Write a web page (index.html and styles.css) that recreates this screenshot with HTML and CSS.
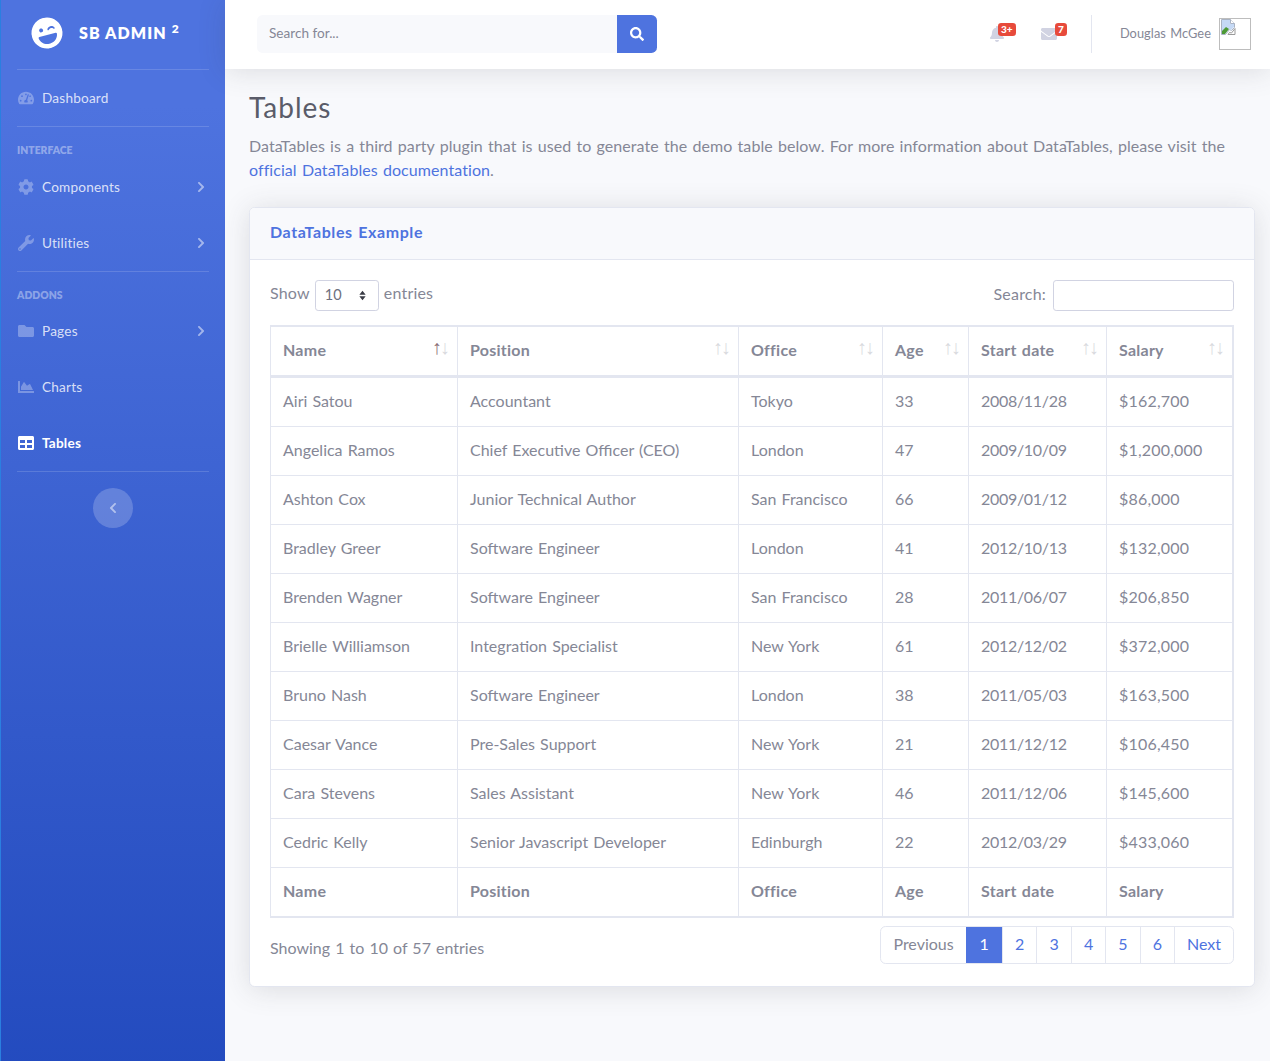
FILE: index.html
```html
<!DOCTYPE html>
<html lang="en">
<head>
<meta charset="utf-8">
<title>Tables</title>
<link rel="stylesheet" href="styles.css">
</head>
<body>
<svg class="sprites" width="0" height="0" aria-hidden="true">
  <symbol id="i-search" viewBox="0 0 512 512"><path d="M505 442.7L405.3 343c-4.5-4.5-10.6-7-17-7H372c27.6-35.3 44-79.7 44-128C416 93.1 322.9 0 208 0S0 93.1 0 208s93.1 208 208 208c48.3 0 92.7-16.4 128-44v16.3c0 6.4 2.5 12.5 7 17l99.7 99.7c9.4 9.4 24.6 9.4 33.9 0l28.3-28.3c9.4-9.4 9.4-24.6.1-34zM208 336c-70.7 0-128-57.2-128-128 0-70.7 57.2-128 128-128 70.7 0 128 57.2 128 128 0 70.7-57.2 128-128 128z"/></symbol>
  <symbol id="i-bell" viewBox="0 0 448 512"><path d="M224 512c35.32 0 63.97-28.65 63.97-64H160.03c0 35.35 28.65 64 63.97 64zm215.39-149.71c-19.32-20.76-55.47-51.99-55.47-154.29 0-77.7-54.48-139.9-127.94-155.16V32c0-17.67-14.32-32-31.98-32s-31.98 14.33-31.98 32v20.84C118.56 68.1 64.08 130.3 64.08 208c0 102.3-36.15 133.53-55.47 154.29-6 6.45-8.66 14.16-8.61 21.71.11 16.4 12.98 32 32.1 32h383.8c19.12 0 32-15.6 32.1-32 .05-7.55-2.61-15.27-8.61-21.71z"/></symbol>
  <symbol id="i-envelope" viewBox="0 0 512 512"><path d="M502.3 190.8c3.9-3.1 9.7-.2 9.7 4.7V400c0 26.5-21.5 48-48 48H48c-26.5 0-48-21.5-48-48V195.6c0-5 5.7-7.8 9.7-4.7 22.4 17.4 52.1 39.5 154.1 113.6 21.1 15.4 56.7 47.8 92.2 47.6 35.7.3 72-32.8 92.3-47.6 102-74.1 131.6-96.3 154-113.7zM256 320c23.2.4 56.6-29.2 73.4-41.4 132.7-96.3 142.8-104.7 173.4-128.7 5.8-4.5 9.2-11.5 9.2-18.9v-19c0-26.5-21.5-48-48-48H48C21.5 64 0 85.5 0 112v19c0 7.4 3.4 14.3 9.2 18.9 30.6 23.9 40.7 32.4 173.4 128.7 16.8 12.2 50.2 41.8 73.4 41.4z"/></symbol>
  <symbol id="i-right" viewBox="0 0 320 512"><path d="M285.476 272.971L91.132 467.314c-9.373 9.373-24.569 9.373-33.941 0l-22.667-22.667c-9.357-9.357-9.375-24.522-.04-33.901L188.505 256 34.484 101.255c-9.335-9.379-9.317-24.544.04-33.901l22.667-22.667c9.373-9.373 24.569-9.373 33.941 0L285.475 239.03c9.373 9.372 9.373 24.568.001 33.941z"/></symbol>
  <symbol id="i-left" viewBox="0 0 320 512"><path d="M34.52 239.03L228.87 44.69c9.37-9.37 24.57-9.37 33.94 0l22.67 22.67c9.36 9.36 9.37 24.52.04 33.9L131.49 256l154.02 154.75c9.34 9.38 9.32 24.54-.04 33.9l-22.67 22.67c-9.37 9.37-24.57 9.37-33.94 0L34.52 272.97c-9.37-9.37-9.37-24.57 0-33.94z"/></symbol>
  <symbol id="i-folder" viewBox="0 0 512 512"><path d="M464 128H272l-64-64H48C21.49 64 0 85.49 0 112v288c0 26.51 21.49 48 48 48h416c26.51 0 48-21.49 48-48V176c0-26.51-21.49-48-48-48z"/></symbol>
  <symbol id="i-chart" viewBox="0 0 512 512"><path d="M500 384c6.6 0 12 5.4 12 12v40c0 6.6-5.4 12-12 12H12c-6.6 0-12-5.4-12-12V76c0-6.6 5.4-12 12-12h40c6.6 0 12 5.4 12 12v308h436zM372.7 159.5L288 216l-85.3-113.7c-5.1-6.8-15.5-6.3-19.9 1L96 248v104h384l-89.9-187.8c-3.2-6.5-11.4-8.7-17.4-4.7z"/></symbol>
  <symbol id="i-table" viewBox="0 0 512 512"><path d="M464 32H48C21.49 32 0 53.49 0 80v352c0 26.51 21.49 48 48 48h416c26.51 0 48-21.49 48-48V80c0-26.51-21.49-48-48-48zM224 416H64v-96h160v96zm0-160H64v-96h160v96zm224 160H288v-96h160v96zm0-160H288v-96h160v96z"/></symbol>
  <symbol id="i-cog" viewBox="0 0 512 512"><path d="M487.4 315.7l-42.6-24.6c4.3-23.2 4.3-47 0-70.2l42.6-24.6c4.9-2.8 7.1-8.6 5.5-14-11.1-35.6-30-67.8-54.7-94.6-3.8-4.1-10-5.1-14.8-2.3L380.8 110c-17.9-15.4-38.5-27.3-60.8-35.1V25.8c0-5.6-3.9-10.5-9.4-11.7-36.7-8.2-74.3-7.8-109.2 0-5.5 1.2-9.4 6.1-9.4 11.7V75c-22.2 7.9-42.8 19.8-60.8 35.1L88.7 85.5c-4.9-2.8-11-1.9-14.8 2.3-24.7 26.7-43.6 58.9-54.7 94.6-1.7 5.4.6 11.2 5.5 14L67.3 221c-4.3 23.2-4.3 47 0 70.2l-42.6 24.6c-4.9 2.8-7.1 8.6-5.5 14 11.1 35.6 30 67.8 54.7 94.6 3.8 4.1 10 5.1 14.8 2.3l42.6-24.6c17.9 15.4 38.5 27.3 60.8 35.1v49.2c0 5.6 3.9 10.5 9.4 11.7 36.7 8.2 74.3 7.8 109.2 0 5.5-1.2 9.4-6.1 9.4-11.7v-49.2c22.2-7.9 42.8-19.8 60.8-35.1l42.6 24.6c4.9 2.8 11 1.9 14.8-2.3 24.7-26.7 43.6-58.9 54.7-94.6 1.5-5.5-.7-11.3-5.6-14.1zM256 336c-44.1 0-80-35.9-80-80s35.9-80 80-80 80 35.9 80 80-35.9 80-80 80z"/></symbol>
  <symbol id="i-wrench" viewBox="0 0 512 512"><path d="M507.73 109.1c-2.24-9.03-13.54-12.09-20.12-5.51l-74.36 74.36-67.88-11.31-11.31-67.88 74.36-74.36c6.62-6.62 3.43-17.9-5.66-20.16-47.38-11.74-99.55.91-136.58 37.93-39.64 39.64-50.55 97.1-34.05 147.2L18.74 402.76c-24.99 24.99-24.99 65.51 0 90.5 24.99 24.99 65.51 24.99 90.5 0l213.21-213.21c50.12 16.71 107.47 5.68 147.37-34.22 37.07-37.07 49.7-89.32 37.91-136.73zM64 472c-13.25 0-24-10.75-24-24 0-13.26 10.75-24 24-24s24 10.74 24 24c0 13.25-10.75 24-24 24z"/></symbol>
  <symbol id="i-gauge" viewBox="0 0 576 512"><path d="M288 32C128.94 32 0 160.94 0 320c0 52.8 14.25 102.26 39.06 144.8 5.61 9.62 16.3 15.2 27.44 15.2h443c11.14 0 21.83-5.58 27.44-15.2C561.75 422.26 576 372.8 576 320c0-159.06-128.94-288-288-288zm0 64c14.71 0 26.58 10.13 30.32 23.65-1.11 2.26-2.64 4.23-3.45 6.67l-9.22 27.67c-5.13 3.49-10.97 6.01-17.64 6.01-17.67 0-32-14.33-32-32S270.33 96 288 96zM96 384c-17.67 0-32-14.33-32-32s14.33-32 32-32 32 14.33 32 32-14.33 32-32 32zm48-160c-17.67 0-32-14.33-32-32s14.33-32 32-32 32 14.33 32 32-14.33 32-32 32zm246.77-72.41l-61.33 184C343.13 347.33 352 364.54 352 384c0 11.72-3.38 22.55-8.88 32H232.88c-5.5-9.45-8.88-20.28-8.88-32 0-33.94 26.5-61.43 59.9-63.59l61.34-184.01c4.17-12.56 17.73-19.45 30.36-15.17 12.57 4.19 19.35 17.79 15.17 30.36zm14.66 57.2l15.52-46.55c3.47-1.29 7.13-2.23 11.05-2.23 17.67 0 32 14.33 32 32s-14.33 32-32 32c-11.38-.01-20.89-6.28-26.57-15.22zM480 384c-17.67 0-32-14.33-32-32s14.33-32 32-32 32 14.33 32 32-14.33 32-32 32z"/></symbol>
  <symbol id="i-laugh" viewBox="0 0 496 512"><path d="M248 8C111 8 0 119 0 256s111 248 248 248 248-111 248-248S385 8 248 8zm20.1 198.1c4-25.2 34.2-42.1 59.9-42.1s55.9 16.9 59.9 42.1c1.7 11.1-11.4 18.3-19.8 10.8l-9.5-8.5c-14.8-13.2-46.2-13.2-61 0L288 217c-8.4 7.4-21.6.3-19.9-10.9zM168 160c17.7 0 32 14.3 32 32s-14.3 32-32 32-32-14.3-32-32 14.3-32 32-32zm230.9 146C390 377 329.4 432 256 432h-16c-73.4 0-134-55-142.9-126-1.2-9.5 6.3-18 15.9-18h270c9.6 0 17.1 8.4 15.9 18z"/></symbol>
</svg>

<div class="wrapper">
  <aside class="sidebar">
    <a class="brand" href="#">
      <svg class="brand-icon"><use href="#i-laugh"/></svg>
      <span class="brand-text">SB ADMIN <sup>2</sup></span>
    </a>
    <hr class="side-rule">
    <a class="nav-link" href="#"><svg class="nav-icon"><use href="#i-gauge"/></svg><span>Dashboard</span></a>
    <hr class="side-rule">
    <div class="side-heading">Interface</div>
    <a class="nav-link" href="#"><svg class="nav-icon"><use href="#i-cog"/></svg><span>Components</span><svg class="nav-arrow"><use href="#i-right"/></svg></a>
    <a class="nav-link" href="#"><svg class="nav-icon"><use href="#i-wrench"/></svg><span>Utilities</span><svg class="nav-arrow"><use href="#i-right"/></svg></a>
    <hr class="side-rule">
    <div class="side-heading tight">Addons</div>
    <a class="nav-link" href="#"><svg class="nav-icon"><use href="#i-folder"/></svg><span>Pages</span><svg class="nav-arrow"><use href="#i-right"/></svg></a>
    <a class="nav-link" href="#"><svg class="nav-icon"><use href="#i-chart"/></svg><span>Charts</span></a>
    <a class="nav-link active" href="#"><svg class="nav-icon"><use href="#i-table"/></svg><span>Tables</span></a>
    <hr class="side-rule">
    <button class="side-toggle" type="button" aria-label="Toggle sidebar"><svg class="toggle-icon"><use href="#i-left"/></svg></button>
  </aside>

  <div class="main">
    <header class="topbar">
      <form class="top-search">
        <input class="top-input" type="text" placeholder="Search for...">
        <button class="top-btn" type="button" aria-label="Search"><svg class="top-btn-icon"><use href="#i-search"/></svg></button>
      </form>
      <div class="top-right">
        <a class="alert-link bell" href="#"><svg class="bell-icon"><use href="#i-bell"/></svg><span class="badge">3+</span></a>
        <a class="alert-link mail" href="#"><svg class="mail-icon"><use href="#i-envelope"/></svg><span class="badge">7</span></a>
        <div class="top-divider"></div>
        <a class="user" href="#">
          <span class="user-name">Douglas McGee</span>
          <span class="avatar">
            <svg class="broken" viewBox="0 0 16 16">
              <path d="M1.500 .5h9l4 4v4l-3 3-2-1-4 5h-4z" fill="#fff" stroke="#a9b3c4"/>
              <path d="M2 1h8v4h4v3l-3 3-2-1-4 5H2z" fill="#c5d9f5"/>
              <path d="M2 12l4-4 3 2-4 5H2z" fill="#4d9a35"/>
              <path d="M10.500 .5v4h4" fill="#fff" stroke="#a9b3c4"/>
              <path d="M15 9.500v6H8l1.500-2 2 .5z" fill="#fff" stroke="#9a9a9a"/>
            </svg>
          </span>
        </a>
      </div>
    </header>

    <main class="content">
      <h1 class="page-title">Tables</h1>
      <p class="intro">DataTables is a third party plugin that is used to generate the demo table below. For more information about DataTables, please visit the <a href="#">official DataTables documentation</a>.</p>

      <section class="card">
        <div class="card-header"><h6>DataTables Example</h6></div>
        <div class="card-body">
          <div class="dt-top">
            <label class="dt-length"><span class="dt-label">Show</span><span class="select-box">10<svg class="select-arrows" viewBox="0 0 10 14"><path d="M5 1l4 5H1zM5 13L1 8h8z"/></svg></span><span class="dt-label">entries</span></label>
            <label class="dt-filter"><span class="dt-label">Search:</span><input class="dt-input" type="search"></label>
          </div>
          <table class="data">
            <colgroup>
              <col class="c1"><col class="c2"><col class="c3"><col class="c4"><col class="c5"><col class="c6">
            </colgroup>
            <thead>
              <tr>
                <th class="sort asc">Name</th><th class="sort">Position</th><th class="sort">Office</th><th class="sort">Age</th><th class="sort">Start date</th><th class="sort">Salary</th>
              </tr>
            </thead>
            <tbody>
              <tr><td>Airi Satou</td><td>Accountant</td><td>Tokyo</td><td>33</td><td>2008/11/28</td><td>$162,700</td></tr>
              <tr><td>Angelica Ramos</td><td>Chief Executive Officer (CEO)</td><td>London</td><td>47</td><td>2009/10/09</td><td>$1,200,000</td></tr>
              <tr><td>Ashton Cox</td><td>Junior Technical Author</td><td>San Francisco</td><td>66</td><td>2009/01/12</td><td>$86,000</td></tr>
              <tr><td>Bradley Greer</td><td>Software Engineer</td><td>London</td><td>41</td><td>2012/10/13</td><td>$132,000</td></tr>
              <tr><td>Brenden Wagner</td><td>Software Engineer</td><td>San Francisco</td><td>28</td><td>2011/06/07</td><td>$206,850</td></tr>
              <tr><td>Brielle Williamson</td><td>Integration Specialist</td><td>New York</td><td>61</td><td>2012/12/02</td><td>$372,000</td></tr>
              <tr><td>Bruno Nash</td><td>Software Engineer</td><td>London</td><td>38</td><td>2011/05/03</td><td>$163,500</td></tr>
              <tr><td>Caesar Vance</td><td>Pre-Sales Support</td><td>New York</td><td>21</td><td>2011/12/12</td><td>$106,450</td></tr>
              <tr><td>Cara Stevens</td><td>Sales Assistant</td><td>New York</td><td>46</td><td>2011/12/06</td><td>$145,600</td></tr>
              <tr><td>Cedric Kelly</td><td>Senior Javascript Developer</td><td>Edinburgh</td><td>22</td><td>2012/03/29</td><td>$433,060</td></tr>
            </tbody>
            <tfoot>
              <tr><th>Name</th><th>Position</th><th>Office</th><th>Age</th><th>Start date</th><th>Salary</th></tr>
            </tfoot>
          </table>
          <div class="dt-bottom">
            <div class="dt-info">Showing 1 to 10 of 57 entries</div>
            <ul class="pager">
              <li class="pg prev">Previous</li>
              <li class="pg current">1</li>
              <li class="pg num">2</li>
              <li class="pg num">3</li>
              <li class="pg num">4</li>
              <li class="pg num">5</li>
              <li class="pg num">6</li>
              <li class="pg next">Next</li>
            </ul>
          </div>
        </div>
      </section>
    </main>
  </div>
</div>
</body>
</html>
```
FILE: styles.css
```css
* { box-sizing: border-box; }
html, body { height: 100%; }
body {
  margin: 0;
  background: #f8f9fc;
  color: #858796;
  font-family: "Lato", "Noto Sans", "Liberation Sans", sans-serif;
  font-size: 16px;
  line-height: 24px;
  word-spacing: 1px;
  overflow: hidden;
}
a { color: #4e73df; text-decoration: none; }
.sprites { position: absolute; }
svg { fill: currentColor; display: block; }

.wrapper { display: flex; min-height: 1061px; }

/* sidebar */
.sidebar {
  width: 225px;
  flex: none;
  background: linear-gradient(180deg, #4e73df 10%, #224abe 103%);
  border-left: 1px solid #2a7fe0;
  display: flex;
  flex-direction: column;
}
.brand {
  height: 69px;
  display: flex;
  align-items: center;
  padding: 0 0 4px 30px;
  color: #fff;
}
.brand-icon { width: 32px; height: 32px; transform: rotate(-15deg); }
.brand-text {
  margin-left: 16px;
  font-size: 16px;
  font-weight: 800;
  letter-spacing: 1.1px;
  word-spacing: 0;
  white-space: nowrap;
}
.brand-text sup { font-size: 12px; line-height: 0; vertical-align: 6px; }
.side-rule {
  margin: 0 16px;
  height: 1px;
  border: 0;
  background: rgba(255, 255, 255, .15);
  flex: none;
}
.side-heading {
  margin: 15px 0 0;
  padding: 0 16px;
  height: 17px;
  line-height: 16px;
  font-size: 10.4px;
  font-weight: 800;
  text-transform: uppercase;
  color: rgba(255, 255, 255, .4);
}
.side-heading.tight { height: 16px; }
.nav-link {
  height: 56px;
  display: flex;
  align-items: center;
  padding: 0 20px 0 17px;
  font-size: 13.6px;
  letter-spacing: .2px;
  color: rgba(255, 255, 255, .8);
  flex: none;
}
.nav-icon {
  width: 16px;
  height: 16px;
  margin-right: 8px;
  color: rgba(255, 255, 255, .3);
}
.nav-arrow {
  width: 8px;
  height: 12px;
  margin-left: auto;
  color: rgba(255, 255, 255, .5);
}
.nav-link.active { color: #fff; font-weight: 700; }
.nav-link.active .nav-icon { color: #fff; }
.side-toggle {
  align-self: center;
  margin: 16px 0 0 -1px;
  width: 40px;
  height: 40px;
  border: 0;
  padding: 0;
  border-radius: 50%;
  background: rgba(255, 255, 255, .2);
  color: rgba(255, 255, 255, .5);
  display: flex;
  align-items: center;
  justify-content: center;
}
.toggle-icon { width: 8px; height: 12px; }

/* main */
.main { flex: 1; min-width: 0; display: flex; flex-direction: column; }
.topbar {
  height: 69px;
  background: #fff;
  box-shadow: 0 2.4px 28px 0 rgba(58, 59, 69, .15);
  display: flex;
  align-items: center;
  padding: 0 19px 1px 32px;
  position: relative;
}
.top-search { display: flex; width: 400px; height: 38px; margin: 0; }
.top-input {
  flex: 1;
  min-width: 0;
  height: 38px;
  border: 0;
  background: #f8f9fc;
  border-radius: 5.6px 0 0 5.6px;
  padding: 0 12px 2px;
  font: inherit;
  font-size: 13.6px;
  color: #6e707e;
  outline: 0;
}
.top-input::placeholder { color: #858796; opacity: 1; }
.top-btn {
  width: 40px;
  height: 38px;
  border: 0;
  padding: 0;
  background: #4e73df;
  color: #fff;
  border-radius: 0 5.6px 5.6px 0;
  display: flex;
  align-items: center;
  justify-content: center;
}
.top-btn-icon { width: 14px; height: 14px; }
.top-right { margin-left: auto; display: flex; align-items: center; }
.alert-link { position: relative; display: block; color: #d1d3e2; }
.bell { width: 15px; height: 16px; margin-right: 36px; }
.bell-icon { width: 14px; height: 16px; }
.mail { width: 17px; height: 16px; margin-right: 33px; }
.mail-icon { width: 16px; height: 16px; }
.badge {
  position: absolute;
  top: -3px;
  left: 8px;
  height: 13px;
  padding: 0 3px;
  min-width: 12px;
  background: #e74a3b;
  border-radius: 3.2px;
  color: #fff;
  font-size: 10px;
  font-weight: 900;
  line-height: 13px;
  text-align: center;
  white-space: nowrap;
}
.mail .badge { left: 14px; }
.top-divider { width: 1px; height: 38px; background: #e3e6f0; margin-right: 28px; }
.user { display: flex; align-items: center; color: #858796; }
.user-name { font-size: 12.8px; letter-spacing: .06px; margin: -2px 8px 0 0; white-space: nowrap; }
.avatar {
  width: 32px;
  height: 32px;
  border: 1px solid #bdbdbd;
  display: block;
}
.broken { width: 16px; height: 16px; }

.content { padding: 22px 15px 0 24px; }
.page-title {
  margin: 0 0 9px;
  font-size: 28px;
  line-height: 33.6px;
  font-weight: 400;
  letter-spacing: 1px;
  color: #5a5c69;
}
.intro { margin: 0 0 25px; letter-spacing: .07px; }

.card {
  background: #fff;
  border: 1px solid #e3e6f0;
  border-radius: 5.6px;
  box-shadow: 0 2.4px 28px 0 rgba(58, 59, 69, .15);
}
.card-header {
  height: 52px;
  padding: 0 20px 2px;
  background: #f8f9fc;
  border-bottom: 1px solid #e3e6f0;
  border-radius: 4.6px 4.6px 0 0;
  display: flex;
  align-items: center;
}
.card-header h6 {
  margin: 0;
  font-size: 16px;
  font-weight: 700;
  letter-spacing: .6px;
  color: #4e73df;
}
.card-body { padding: 20px 20px 22px; }

.dt-top { display: flex; justify-content: space-between; height: 31px; margin-bottom: 14px; }
.dt-length, .dt-filter { display: flex; align-items: center; }
.dt-label { letter-spacing: .2px; padding-bottom: 3px; }
.dt-length .dt-label { padding-bottom: 5px; }
.select-box {
  width: 64px;
  height: 31px;
  margin: 0 5px;
  padding: 0 11px 0 9px;
  border: 1px solid #d1d3e2;
  border-radius: 3.2px;
  background: #fff;
  color: #6e707e;
  font-size: 14.5px;
  display: flex;
  align-items: center;
  justify-content: space-between;
}
.select-arrows { width: 9px; height: 11px; fill: #3a3b45; }
.dt-input {
  width: 181px;
  height: 31px;
  margin-left: 7px;
  border: 1px solid #d1d3e2;
  border-radius: 3.2px;
  outline: 0;
  background: #fff;
}

.data {
  width: 964px;
  table-layout: fixed;
  border-collapse: separate;
  border-spacing: 0;
  border: 1px solid #e3e6f0;
}
.c1 { width: 187px; }
.c2 { width: 281px; }
.c3 { width: 144px; }
.c4 { width: 86px; }
.c5 { width: 138px; }
.c6 { width: 126px; }
.data th, .data td {
  padding: 11px 12px 13px;
  text-align: left;
  border-right: 1px solid #e3e6f0;
  border-top: 1px solid #e3e6f0;
  white-space: nowrap;
}
.data th { font-weight: 700; letter-spacing: .25px; }
.data td:nth-child(5) { letter-spacing: -.3px; }
.data td:nth-child(6) { letter-spacing: .2px; }
.data thead th { border-bottom: 2px solid #e3e6f0; }
.data tfoot th { border-bottom: 1px solid #e3e6f0; }
.sort { position: relative; padding-right: 30px; }
.sort::before, .sort::after {
  position: absolute;
  top: 12px;
  font-family: "Liberation Sans", sans-serif;
  font-size: 20px;
  font-weight: 400;
  line-height: 16px;
  opacity: .3;
}
.sort::before { content: "\2191"; right: 15px; }
.sort::after { content: "\2193"; right: 7px; }
.sort.asc::before { opacity: .9; color: #80606a; }

.dt-bottom { display: flex; justify-content: space-between; align-items: flex-start; margin-top: 8px; }
.dt-info { padding-top: 10px; }
.pager {
  display: flex;
  list-style: none;
  margin: 0;
  padding: 0;
  height: 38px;
  border: 1px solid #e3e6f0;
  border-radius: 5.6px;
  overflow: hidden;
}
.pg {
  height: 36px;
  line-height: 34px;
  text-align: center;
  color: #4e73df;
  border-left: 1px solid #e3e6f0;
}
.prev { width: 85px; border-left: 0; color: #858796; }
.num { width: 34.4px; }
.next { width: 59px; }
.current {
  width: 36px;
  height: 38px;
  margin: -1px 0;
  line-height: 36px;
  background: #4e73df;
  color: #fff;
  border-left: 0;
}
```
